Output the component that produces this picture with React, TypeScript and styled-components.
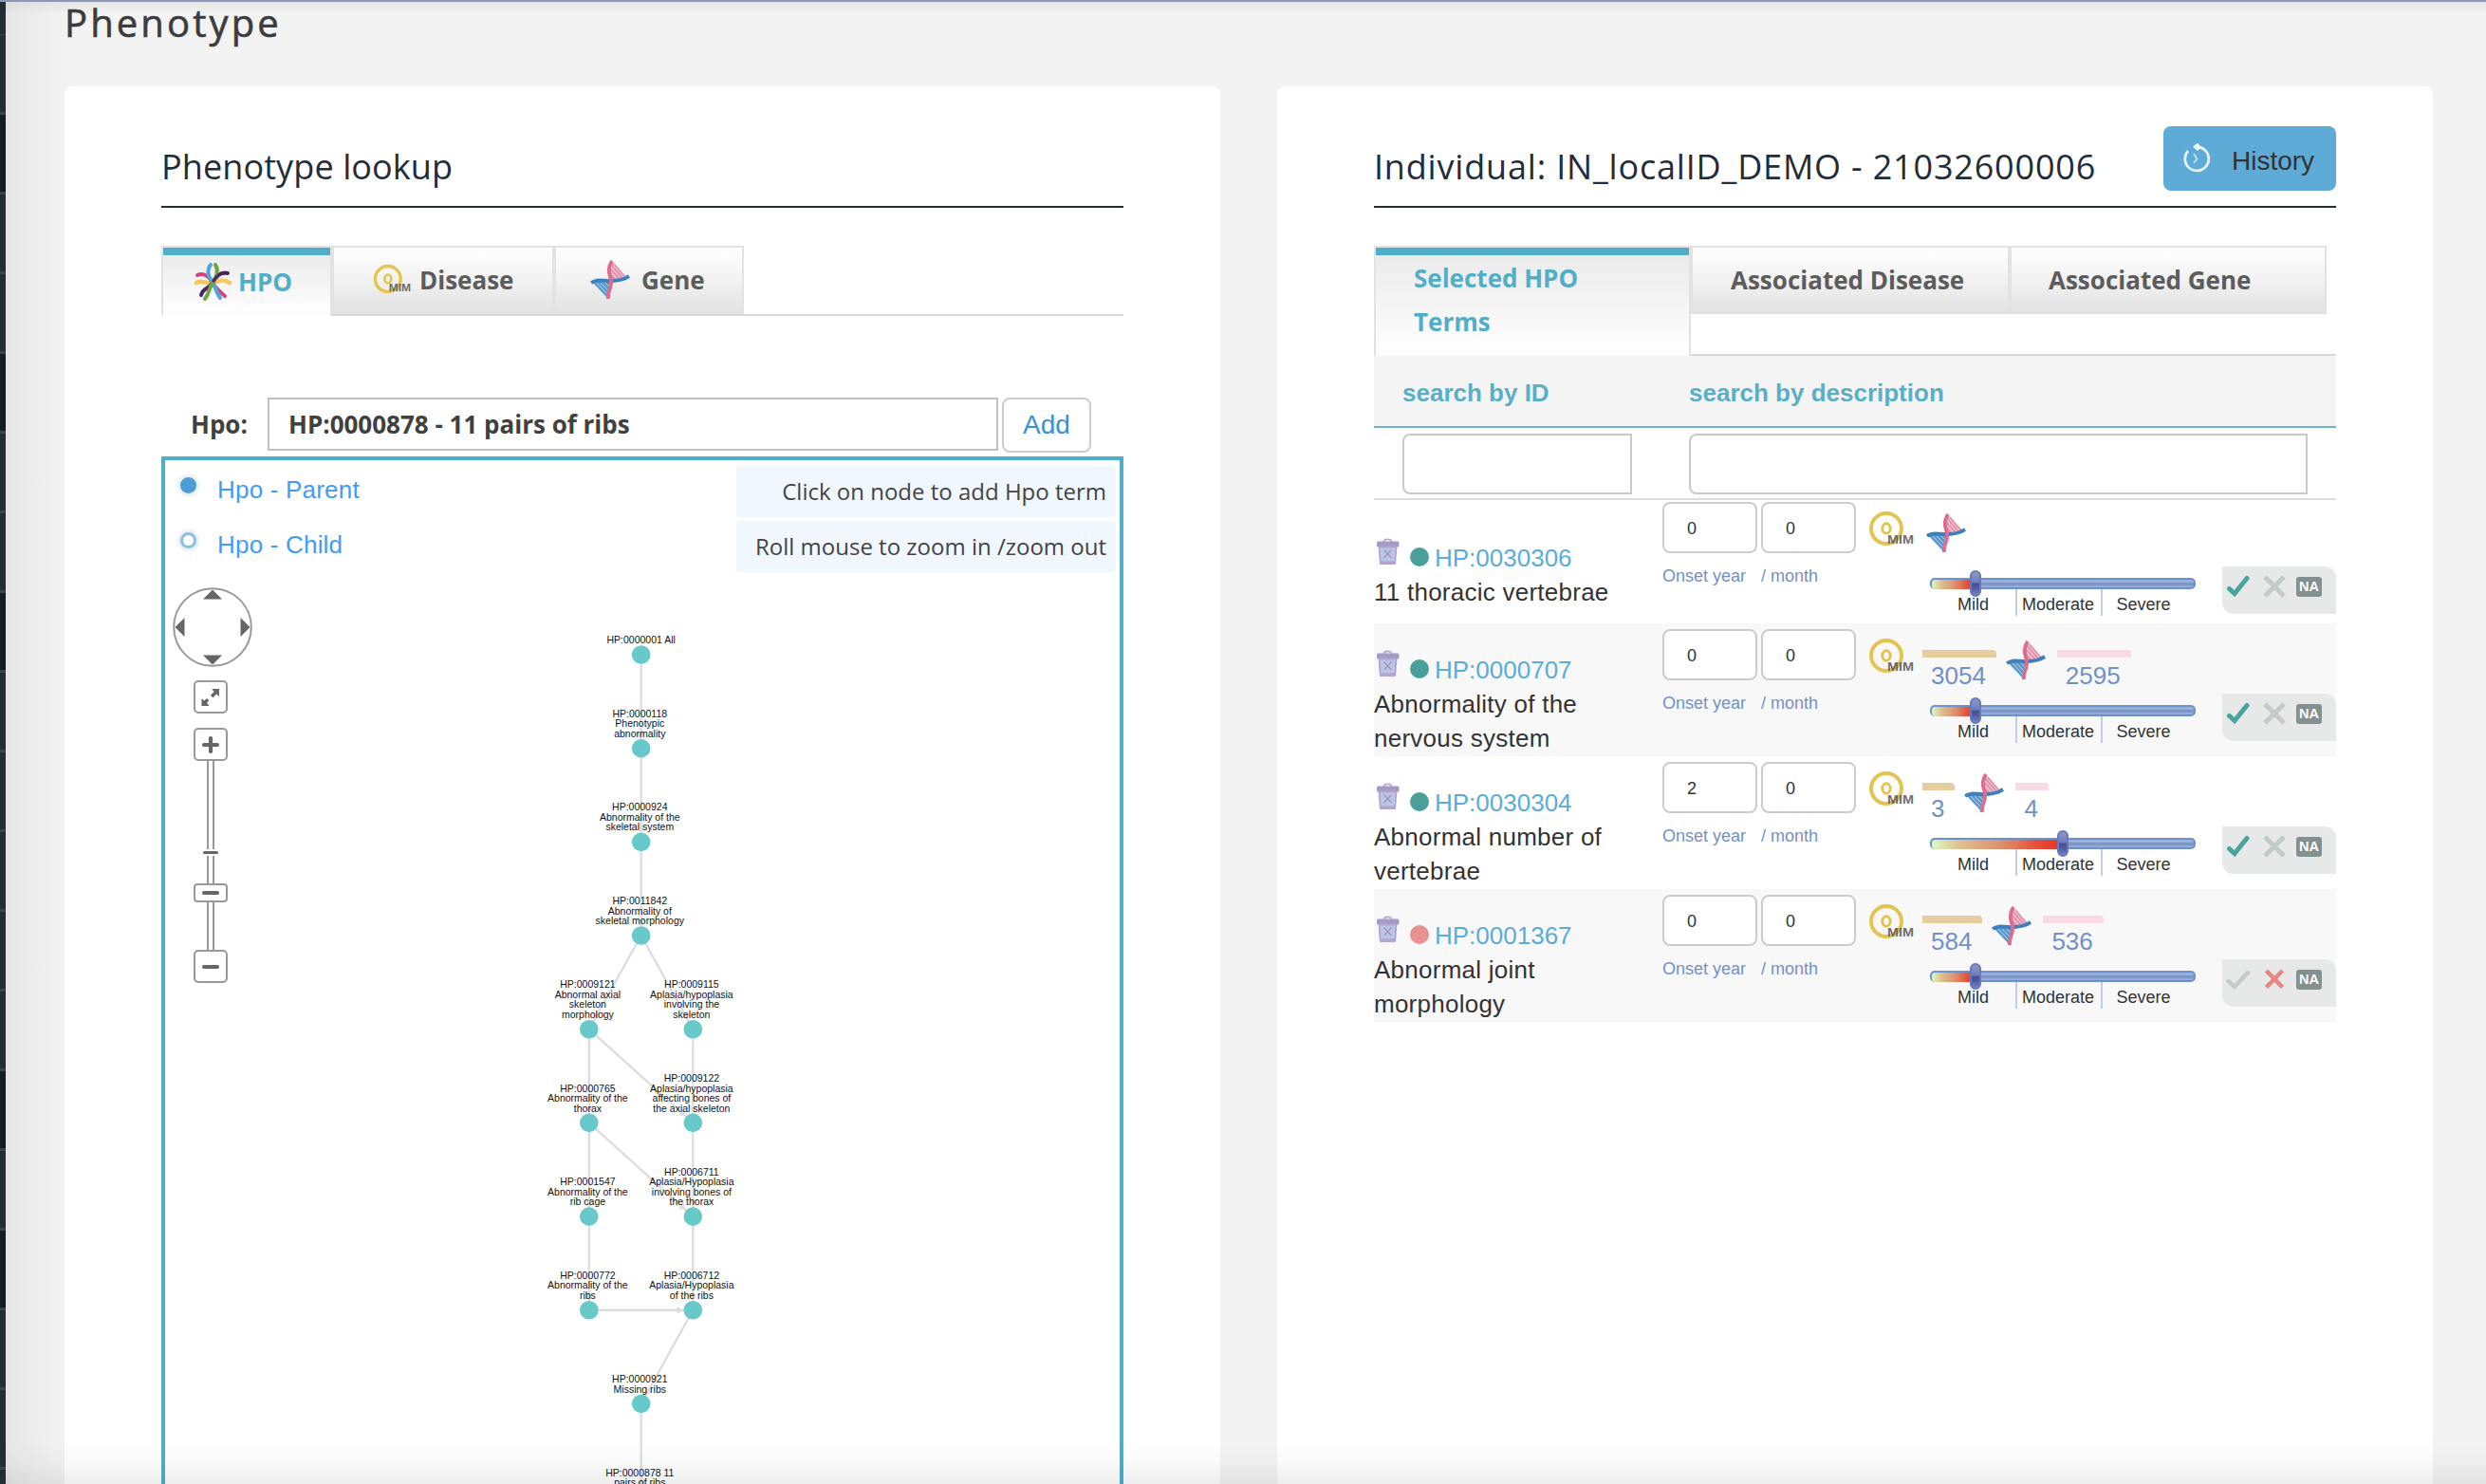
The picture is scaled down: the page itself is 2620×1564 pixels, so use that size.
import React from "react";
import styled, { createGlobalStyle } from "styled-components";

const teal = "#50aec8";
const sans = '"Liberation Sans", Arial, Helvetica, sans-serif';
const open = '"Open Sans", "Noto Sans", sans-serif';

const GlobalStyle = createGlobalStyle`
  * { box-sizing: border-box; }
  body { margin: 0; background: #f3f3f3; font-family: ${sans}; color: #333; }
  h1, h2, p { margin: 0; font-weight: 400; }
  input, button { font: inherit; outline: none; }
`;

/* ---------- shell ---------- */

const Shell = styled.div`
  position: relative;
  display: flex;
  width: 2620px;
  height: 1564px;
  overflow: hidden;
  border-top: 2px solid #8a97b8;
  background: #f3f3f3;
`;

const Sidebar = styled.nav`
  flex: 0 0 6px;
  padding-top: 34px;
  background: #222d38;
`;

const SideItem = styled.div<{ $dark?: boolean }>`
  height: 84px;
  border-top: 1px solid #3a454e;
  border-bottom: 2px solid #3a454e;
  background: ${(p) => (p.$dark ? "#161d22" : "#222d38")};
`;

const Main = styled.main`
  flex: 1;
  min-width: 0;
  padding: 0 56px 0 62px;
  background: linear-gradient(to right, #e6e6e6 0, #ebebeb 20px, #f0f0f0 48px, #f3f3f3 76px);
`;

const PageTitle = styled.h1`
  height: 89px;
  font: 400 40px/43px ${open};
  letter-spacing: 3.1px;
  color: #3c3c3c;
  -webkit-text-stroke: 0.6px #3c3c3c;
`;

const Columns = styled.div`
  display: flex;
  justify-content: space-between;
`;

const Panel = styled.section`
  width: 1218px;
  height: 1600px;
  padding: 0 102px;
  border-radius: 8px;
  background: #fff;
`;

const BottomShade = styled.div`
  position: absolute;
  left: 6px;
  right: 0;
  bottom: 0;
  height: 48px;
  background: linear-gradient(to bottom, rgba(0, 0, 0, 0), rgba(0, 0, 0, 0.018) 50%, rgba(0, 0, 0, 0.07));
  pointer-events: none;
`;

const TopShade = styled.div`
  position: absolute;
  left: 6px;
  right: 0;
  top: 0;
  height: 14px;
  background: linear-gradient(to bottom, rgba(0, 0, 0, 0.05), rgba(0, 0, 0, 0));
  pointer-events: none;
`;

const PanelHead = styled.header`
  display: flex;
  justify-content: space-between;
  height: 128px;
  margin-bottom: 40px;
  padding-top: 42px;
  border-bottom: 2px solid #222d3a;
`;

const Heading = styled.h2<{ $track: number }>`
  padding-top: 17px;
  font: 400 36px/52px ${open};
  letter-spacing: ${(p) => p.$track}px;
  color: #222d3a;
  white-space: nowrap;
`;

const HistoryButton = styled.button`
  display: flex;
  width: 182px;
  height: 68px;
  padding: 0 0 0 20px;
  border: 0;
  border-radius: 8px;
  background: #5dabd6;
  color: #333;
  font: 28px/73px ${sans};
  text-align: left;
  svg { margin: 17px 22px 0 0; }
`;

/* ---------- tabs ---------- */

const Tabs = styled.div<{ $height: number }>`
  display: flex;
  align-items: flex-start;
  height: ${(p) => p.$height}px;
  border-bottom: 2px solid #d9d9d9;
`;

const Tab = styled.div<{ $width: number; $active?: boolean; $tall?: boolean }>`
  display: flex;
  align-items: center;
  width: ${(p) => p.$width}px;
  height: ${(p) => (p.$tall ? 116 : p.$active ? 74 : 72)}px;
  padding-bottom: ${(p) => (p.$tall ? 4 : 0)}px;
  border: 2px solid #e2e2e2;
  border-bottom-width: ${(p) => (p.$active ? 0 : 2)}px;
  ${(p) => (p.$active ? `box-shadow: inset 0 8px ${teal};` : "")}
  background: ${(p) =>
    p.$active ? "linear-gradient(#e9e9e9, #fff)" : "linear-gradient(#fff, #f2f2f2 50%, #e2e2e2)"};
  color: ${(p) => (p.$active ? teal : "#5c5c5c")};
  font: 700 26px/46px ${open};
`;

const TabIcon = styled.span<{ $left: number; $gap: number }>`
  display: flex;
  margin: 0 ${(p) => p.$gap}px 0 ${(p) => p.$left}px;
`;

const TabText = styled.span<{ $pad?: number }>`
  padding-left: ${(p) => p.$pad || 0}px;
  white-space: pre-line;
`;

/* ---------- lookup ---------- */

const SearchRow = styled.div`
  display: flex;
  align-items: flex-start;
  height: 62px;
  margin-top: 86px;
  padding-left: 31px;
`;

const SearchLabel = styled.label`
  width: 81px;
  font: 700 26px/56px ${open};
  color: #404040;
`;

const SearchInput = styled.input`
  width: 770px;
  height: 56px;
  padding: 0 20px;
  border: 2px solid #c0c0c0;
  background: #fff;
  font: 700 26px/52px ${open};
  color: #404040;
`;

const AddButton = styled.button`
  width: 94px;
  height: 58px;
  margin-left: 4px;
  padding: 0;
  border: 2px solid #ccc;
  border-radius: 8px;
  background: #fff;
  color: #3b8fd4;
  font: 28px/54px ${sans};
`;

const GraphBox = styled.div`
  position: relative;
  height: 1200px;
  padding: 6px 4px 0 16px;
  border: 4px solid ${teal};
`;

const GraphTop = styled.div`
  display: flex;
  justify-content: space-between;
`;

const Legend = styled.div`
  display: flex;
  flex-direction: column;
`;

const LegendItem = styled.div`
  display: flex;
  height: 58px;
  color: #3f9bfb;
  font: 26px/51px ${sans};
  letter-spacing: 0.2px;
`;

const Radio = styled.span<{ $on?: boolean }>`
  width: 17px;
  height: 17px;
  margin: 12px 22px 0 0;
  border: ${(p) => (p.$on ? "0" : "3px solid #84c1e4")};
  border-radius: 50%;
  background: ${(p) => (p.$on ? "#4a9ed8" : "#fff")};
  box-shadow: 0 0 3px 3px #ededed;
`;

const Hints = styled.div`
  display: flex;
  flex-direction: column;
  gap: 4px;
`;

const Hint = styled.p`
  width: 400px;
  height: 54px;
  padding-right: 10px;
  border-radius: 4px;
  background: #f0f7fe;
  color: #444;
  font: 24px/54px ${open};
  text-align: right;
  white-space: nowrap;
`;

const ZoomControl = styled.div`
  position: absolute;
  left: 8px;
  top: 134px;
  width: 84px;
`;

const ZoomButton = styled.div<{ $gap?: number }>`
  display: flex;
  align-items: center;
  justify-content: center;
  width: 36px;
  height: 35px;
  margin: ${(p) => p.$gap || 0}px 0 0 22px;
  border: 2px solid #999;
  border-radius: 5px;
  background: #fff;
`;

const Rail = styled.div<{ $height: number }>`
  width: 8px;
  height: ${(p) => p.$height}px;
  margin-left: 36px;
  border: solid #999;
  border-width: 0 2px;
`;

const RailTick = styled.div`
  width: 16px;
  height: 3px;
  margin: 2px 0 2px 32px;
  border-radius: 2px;
  background: #666;
`;

const RailHandle = styled(ZoomButton)`
  height: 20px;
  border-radius: 4px;
`;

const GraphSvg = styled.svg`
  position: absolute;
  left: 0;
  top: 0;
  pointer-events: none;
  text { font-family: ${sans}; font-size: 10.5px; text-anchor: middle; fill: #111; }
`;

/* ---------- individual ---------- */

const TableHead = styled.div`
  display: grid;
  grid-template-columns: 302px 1fr;
  height: 76px;
  padding-left: 30px;
  border-bottom: 2px solid #6cb6cb;
  background: #f4f4f4;
  color: #5aafc6;
  font: 700 26px/78px ${sans};
`;

const FilterRow = styled.div`
  display: grid;
  grid-template-columns: 242px 652px;
  column-gap: 60px;
  height: 76px;
  padding: 6px 0 0 30px;
  border-bottom: 2px solid #ddd;
`;

const FilterInput = styled.input`
  width: 100%;
  height: 64px;
  padding: 0 16px;
  border: 2px solid #c9c9c9;
  border-radius: 8px 0 0 8px;
  background: #fff;
`;

const Row = styled.div<{ $alt: boolean; $first: boolean }>`
  display: grid;
  grid-template-columns: 304px 216px 374px 120px;
  height: ${(p) => (p.$first ? 130 : 140)}px;
  padding-top: ${(p) => (p.$first ? 2 : 6)}px;
  background: ${(p) => (p.$alt ? "#f8f8f8" : "#fff")};
`;

const TermCell = styled.div<{ $first: boolean }>`
  padding: ${(p) => (p.$first ? 41 : 25)}px 40px 0 0;
  font: 26px/36px ${sans};
  letter-spacing: 0.25px;
  color: #333;
`;

const TermHead = styled.div`
  display: flex;
  height: 36px;
  letter-spacing: 0;
  color: #5bacd8;
`;

const TrashWrap = styled.span`
  display: flex;
  width: 38px;
  margin: -3px 0 0 2px;
`;

const Dot = styled.span<{ $color: string }>`
  width: 20px;
  height: 20px;
  margin: 7px 6px 0 -2px;
  border-radius: 50%;
  background: ${(p) => p.$color};
`;

const OnsetPair = styled.div`
  display: grid;
  grid-template-columns: 100px 100px;
  gap: 4px;
`;

const OnsetInput = styled.input`
  width: 100px;
  height: 54px;
  padding: 2px 24px 0;
  border: 2px solid #ccc;
  border-radius: 8px;
  background: #fff;
  color: #333;
  font: 18px/48px ${sans};
`;

const OnsetLabel = styled.span`
  color: #7290c8;
  font: 18px/40px ${sans};
`;

const Evidence = styled.div`
  display: flex;
  align-items: flex-start;
  height: 80px;
`;

const IconSlot = styled.span<{ $left: number; $top: number; $width: number }>`
  display: flex;
  width: ${(p) => p.$width}px;
  padding-top: ${(p) => p.$top}px;
  margin-left: ${(p) => p.$left}px;
`;

const Count = styled.div<{ $left: number }>`
  margin: 22px 0 0 ${(p) => p.$left}px;
  color: #7290c8;
  font: 26px/38px ${sans};
`;

const CountBar = styled.div<{ $color: string }>`
  height: 8px;
  border-radius: 0 4px 0 0;
  background: ${(p) => p.$color};
`;

const CountText = styled.div`
  padding: 0 11px 0 9px;
`;

const Track = styled.div`
  position: relative;
  width: 280px;
  height: 12px;
  margin-left: 66px;
  border: 2px solid #6a92cf;
  border-radius: 5px;
  background: linear-gradient(#8fa8d6, #a3b6dc 20%, #728dc8 55%, #8aa3d3 75%, #9cb1da);
`;

const TrackFill = styled.div`
  height: 10px;
  border-radius: 4px 0 0 4px;
  background: linear-gradient(to right, #dcfac2, #dcc394 20%, #dc8d6c 55%, #e4503a 80%, #ea3222);
`;

const Thumb = styled.div`
  position: absolute;
  top: -10px;
  width: 12px;
  height: 28px;
  border: 2px solid #6a78b8;
  border-radius: 6px;
  background: linear-gradient(#8c98cb, #6f7dbb 45%, #454f96 52%, #4f5aa2 70%, #7384c6);
`;

const Scale = styled.div`
  display: grid;
  grid-template-columns: 92px 90px 86px;
  height: 28px;
  margin-left: 66px;
  color: #333;
  font: 18px/32px ${sans};
  text-align: center;
`;

const ScaleMark = styled.span`
  height: 28px;
  border-right: 2px solid #bcd0ee;
  &:first-child { padding-left: 1px; }
  &:nth-child(2) { padding-right: 2px; }
  &:last-child { border-right: 0; }
`;

const StatusBox = styled.div`
  display: flex;
  height: 50px;
  margin-top: 68px;
  padding: 8px 0 0 4px;
  border-radius: 0 12px 0 12px;
  background: #e6e9e8;
`;

const StatusIcon = styled.span<{ $width: number }>`
  width: ${(p) => p.$width}px;
  height: 28px;
`;

const NaBadge = styled.span`
  width: 27px;
  height: 21px;
  margin-top: 3px;
  border-radius: 3px;
  background: #82908f;
  color: #fff;
  font: 700 14.5px/21px ${sans};
  text-align: center;
`;

/* ---------- icons ---------- */

const HpoIcon = () => (
  <svg width="42" height="42" viewBox="0 0 42 42" fill="none" strokeWidth="4" strokeLinecap="round">
    <path d="M3 22C8 18 14 24 20 22S32 18 38 22" stroke="#f6c95a" strokeWidth="4.600" />
    <path d="M4 14C11 11 17 16 20 22S28 32 33 36" stroke="#d9417f" />
    <path d="M36 12C29 10 24 15 20 22S10 27 8 35" stroke="#4a2560" />
    <path d="M18 3C13 10 16 16 20 22S24 33 28 38" stroke="#4fa6da" />
    <path d="M23 3C27 10 24 16 20 22S17 33 12 39" stroke="#6fa544" />
    <path d="M34 12C28 11 24 15 21 20" stroke="#4a2560" strokeWidth="3" />
  </svg>
);

const OmimIcon = ({ width }: { width: number }) => (
  <svg width={width} height={width * 0.8} viewBox="0 0 50 40">
    <circle cx="20" cy="19" r="16" fill="none" stroke="#e3c450" strokeWidth="4" />
    <ellipse cx="20" cy="19" rx="4.200" ry="5.200" fill="none" stroke="#e3c450" strokeWidth="3" />
    <text
      x="21"
      y="34.500"
      fontFamily="Liberation Sans"
      fontWeight="700"
      fontSize="13.500"
      textLength="28"
      lengthAdjust="spacingAndGlyphs"
      fill="#505050"
      opacity=".82"
    >
      MIM
    </text>
  </svg>
);

const GeneIcon = () => (
  <svg width="42" height="42" viewBox="0 0 42 42" fill="none">
    <path d="M23 2C29 6 32 14 39 18L21 22Z" fill="#eebccb" />
    <path d="M2 23L18 40L21 21Z" fill="#5b9ace" />
    <g stroke="#df86a3" strokeWidth="1.200">
      <path d="M22 5L34 19M21 9L31 20M20 14L27 21M25 4L37 18" />
    </g>
    <g stroke="#b9d5eb" strokeWidth="1">
      <path d="M7 24L18 36M11 24L19 32M15 23L20 28" />
    </g>
    <path d="M1 24C8 19 14 23 24 22S36 20 41 17" stroke="#3d80bd" strokeWidth="3.800" />
    <path d="M23 1C16 12 23 17 22 25S18 34 19 41" stroke="#db6d8f" strokeWidth="4" />
  </svg>
);

const TrashIcon = () => (
  <svg width="26" height="29" viewBox="0 0 26 29" fill="none">
    <path d="M8.500 4C8.500 0.500 16.500 0.500 16.500 4" stroke="#bba7cd" strokeWidth="1.600" />
    <rect x="1" y="3.500" width="23.500" height="6" rx="1.500" fill="#a39ac7" />
    <path d="M3.500 9.500H21.500L20.200 27H4.800Z" fill="#b9c7e4" stroke="#b3a3cf" strokeWidth="1.800" strokeLinejoin="round" />
    <path d="M8.500 12.500L16.500 21M16.500 12.500L8.500 21" stroke="#a590c4" strokeWidth="1.300" />
    <path d="M5 25.200H20" stroke="#b3a3cf" strokeWidth="1.600" />
  </svg>
);

const HistoryIcon = () => (
  <svg width="30" height="34" viewBox="0 0 30 34" fill="none" stroke="#e4f1f9" strokeWidth="2.800">
    <path d="M6 9A12.500 12.500 0 1 0 17 5" />
    <path d="M11 4.500L16 0.800L20 5L16 9Z" fill="#f1f8fc" stroke="none" />
    <path d="M12 12L15.500 17.500L12 22" stroke="#b9daee" strokeWidth="2" />
  </svg>
);

const CheckIcon = ({ on }: { on: boolean }) => (
  <svg width="28" height="28" viewBox="0 0 28 28" fill="none">
    <path
      d={on ? "M3.500 15.500L9 20.500L22 4.500" : "M2.500 15L9 21L23 6"}
      stroke={on ? "#4aa39d" : "#c3caca"}
      strokeWidth={on ? 5 : 4.4}
      strokeLinecap="round"
    />
  </svg>
);

const CrossIcon = ({ on }: { on: boolean }) => (
  <svg width="28" height="28" viewBox="0 0 28 28" fill="none">
    <path
      d={on ? "M4.500 4L21.500 21.500M21.500 4L4.500 21.500" : "M3 3L23 23M23 3L3 23"}
      stroke={on ? "#e58883" : "#c3caca"}
      strokeWidth={on ? 4.6 : 5}
    />
  </svg>
);

const DialSvg = styled.svg`
  display: block;
`;

const PanDial = () => (
  <DialSvg width="84" height="84" viewBox="0 0 84 84">
    <circle cx="42" cy="42" r="40.800" fill="#fff" stroke="#999" strokeWidth="2" />
    <path d="M42 2.500L52 12.500H32ZM42 81.500L52 71.500H32ZM2.500 42L12.500 32V52ZM81.500 42L71.500 32V52Z" fill="#666" />
  </DialSvg>
);

const FitIcon = () => (
  <svg width="20" height="20" viewBox="0 0 20 20" fill="#666">
    <path d="M11 1H19V9L16.300 6.500L12.300 10.300L9.800 7.800L13.700 4Z" />
    <path d="M8.500 19H0.500V11L3.200 13.500L6 11L8.200 13.200L6 15.800Z" />
  </svg>
);

const PlusMinus = ({ plus }: { plus?: boolean }) => (
  <svg width="20" height="20" viewBox="0 0 20 20" fill="none" stroke="#666" strokeWidth="4.200" strokeLinecap="round">
    <path d={plus ? "M3 10H17M10 3V17" : "M3 10H17"} />
  </svg>
);

/* ---------- ontology graph ---------- */

const step = 98.68;
const rowY = (i: number) => 205 + i * step;
const MID = 501.7;
const LEFT = 446.8;
const RIGHT = 556.3;

type GraphNode = { id: string; x: number; row: number; lines: string[] };

const nodes: GraphNode[] = [
  { id: "all", x: MID, row: 0, lines: ["HP:0000001 All"] },
  { id: "118", x: MID, row: 1, lines: ["HP:0000118", "Phenotypic", "abnormality"] },
  { id: "924", x: MID, row: 2, lines: ["HP:0000924", "Abnormality of the", "skeletal system"] },
  { id: "11842", x: MID, row: 3, lines: ["HP:0011842", "Abnormality of", "skeletal morphology"] },
  { id: "9121", x: LEFT, row: 4, lines: ["HP:0009121", "Abnormal axial", "skeleton", "morphology"] },
  { id: "9115", x: RIGHT, row: 4, lines: ["HP:0009115", "Aplasia/hypoplasia", "involving the", "skeleton"] },
  { id: "765", x: LEFT, row: 5, lines: ["HP:0000765", "Abnormality of the", "thorax"] },
  { id: "9122", x: RIGHT, row: 5, lines: ["HP:0009122", "Aplasia/hypoplasia", "affecting bones of", "the axial skeleton"] },
  { id: "1547", x: LEFT, row: 6, lines: ["HP:0001547", "Abnormality of the", "rib cage"] },
  { id: "6711", x: RIGHT, row: 6, lines: ["HP:0006711", "Aplasia/Hypoplasia", "involving bones of", "the thorax"] },
  { id: "772", x: LEFT, row: 7, lines: ["HP:0000772", "Abnormality of the", "ribs"] },
  { id: "6712", x: RIGHT, row: 7, lines: ["HP:0006712", "Aplasia/Hypoplasia", "of the ribs"] },
  { id: "921", x: MID, row: 8, lines: ["HP:0000921", "Missing ribs"] },
  { id: "878", x: MID, row: 9, lines: ["HP:0000878 11", "pairs of ribs"] },
];

const edges = [
  ["all", "118"], ["118", "924"], ["924", "11842"], ["11842", "9121"], ["11842", "9115"],
  ["9121", "765"], ["9121", "9122"], ["9115", "9122"], ["765", "1547"], ["765", "6711"],
  ["9122", "6711"], ["1547", "772"], ["6711", "6712"], ["772", "6712"], ["6712", "921"], ["921", "878"],
];

const Graph = () => {
  const find = (id: string) => nodes.find((n) => n.id === id)!;
  return (
    <GraphSvg width="1006" height="1190" viewBox="0 0 1006 1190">
      <defs>
        <marker id="arrow" markerUnits="userSpaceOnUse" markerWidth="8" markerHeight="8" refX="17" refY="4" orient="auto" overflow="visible">
          <path d="M0 0L7 4L0 8Z" fill="#ddd" />
        </marker>
      </defs>
      {edges.map(([a, b]) => {
        const p = find(a);
        const q = find(b);
        return (
          <line key={a + b} x1={p.x} y1={rowY(p.row)} x2={q.x} y2={rowY(q.row)} stroke="#ddd" strokeWidth="2.300" markerEnd="url(#arrow)" />
        );
      })}
      {nodes.map((n) => (
        <g key={n.id}>
          <circle cx={n.x} cy={rowY(n.row)} r="9.800" fill="#67c9c9" />
          {n.lines.map((line, i) => (
            <text key={line} x={n.x - (n.row ? 1.4 : 0)} y={rowY(n.row) - 11.9 - (n.lines.length - 1 - i) * 10.5}>
              {line}
            </text>
          ))}
        </g>
      ))}
    </GraphSvg>
  );
};

/* ---------- data ---------- */

type Term = {
  id: string;
  name: string;
  year: string;
  month: string;
  disease?: string;
  gene?: string;
  severity: number;
  present: boolean;
};

const terms: Term[] = [
  { id: "HP:0030306", name: "11 thoracic vertebrae", year: "0", month: "0", severity: 46, present: true },
  { id: "HP:0000707", name: "Abnormality of the nervous system", year: "0", month: "0", disease: "3054", gene: "2595", severity: 46, present: true },
  { id: "HP:0030304", name: "Abnormal number of vertebrae", year: "2", month: "0", disease: "3", gene: "4", severity: 138, present: true },
  { id: "HP:0001367", name: "Abnormal joint morphology", year: "0", month: "0", disease: "584", gene: "536", severity: 46, present: false },
];

const darkItems = [0, 3, 6, 12, 14];

const TermRow = ({ term, index }: { term: Term; index: number }) => {
  const first = index === 0;
  return (
    <Row $alt={index % 2 === 1} $first={first}>
      <TermCell $first={first}>
        <TermHead>
          <TrashWrap><TrashIcon /></TrashWrap>
          <Dot $color={term.present ? "#4a9f9b" : "#e9918f"} />
          {term.id}
        </TermHead>
        <p>{term.name}</p>
      </TermCell>
      <div>
        <OnsetPair>
          <OnsetInput defaultValue={term.year} />
          <OnsetInput defaultValue={term.month} />
          <OnsetLabel>Onset year</OnsetLabel>
          <OnsetLabel>/ month</OnsetLabel>
        </OnsetPair>
      </div>
      <div>
        <Evidence>
          <IconSlot $left={0} $top={9} $width={52}><OmimIcon width={50} /></IconSlot>
          {term.disease && (
            <Count $left={6}>
              <CountBar $color="#e4cd9f" />
              <CountText>{term.disease}</CountText>
            </Count>
          )}
          <IconSlot $left={10} $top={12} $width={42}><GeneIcon /></IconSlot>
          {term.gene && (
            <Count $left={12}>
              <CountBar $color="#f8dae4" />
              <CountText>{term.gene}</CountText>
            </Count>
          )}
        </Evidence>
        <Track>
          <TrackFill style={{ width: term.severity }} />
          <Thumb style={{ left: term.severity - 6 }} />
        </Track>
        <Scale>
          <ScaleMark>Mild</ScaleMark>
          <ScaleMark>Moderate</ScaleMark>
          <ScaleMark>Severe</ScaleMark>
        </Scale>
      </div>
      <StatusBox>
        <StatusIcon $width={38}><CheckIcon on={term.present} /></StatusIcon>
        <StatusIcon $width={36}><CrossIcon on={!term.present} /></StatusIcon>
        <NaBadge>NA</NaBadge>
      </StatusBox>
    </Row>
  );
};

export default function App() {
  return (
    <Shell>
      <GlobalStyle />
      <Sidebar>
        <SideItem />
        {Array.from({ length: 18 }, (_, i) => (
          <SideItem key={i} $dark={darkItems.includes(i)} />
        ))}
      </Sidebar>
      <Main>
        <PageTitle>Phenotype</PageTitle>
        <Columns>
          <Panel>
            <PanelHead>
              <Heading $track={0.1}>Phenotype lookup</Heading>
            </PanelHead>
            <Tabs $height={74}>
              <Tab $width={180} $active>
                <TabIcon $left={32} $gap={5}><HpoIcon /></TabIcon>
                <TabText>HPO</TabText>
              </Tab>
              <Tab $width={234}>
                <TabIcon $left={40} $gap={8}><OmimIcon width={42} /></TabIcon>
                <TabText>Disease</TabText>
              </Tab>
              <Tab $width={200}>
                <TabIcon $left={36} $gap={12}><GeneIcon /></TabIcon>
                <TabText>Gene</TabText>
              </Tab>
            </Tabs>
            <SearchRow>
              <SearchLabel>Hpo:</SearchLabel>
              <SearchInput defaultValue="HP:0000878 - 11 pairs of ribs" />
              <AddButton>Add</AddButton>
            </SearchRow>
            <GraphBox>
              <Graph />
              <GraphTop>
                <Legend>
                  <LegendItem><Radio $on />Hpo - Parent</LegendItem>
                  <LegendItem><Radio />Hpo - Child</LegendItem>
                </Legend>
                <Hints>
                  <Hint>Click on node to add Hpo term</Hint>
                  <Hint>Roll mouse to zoom in /zoom out</Hint>
                </Hints>
              </GraphTop>
              <ZoomControl>
                <PanDial />
                <ZoomButton $gap={14}><FitIcon /></ZoomButton>
                <ZoomButton $gap={15}><PlusMinus plus /></ZoomButton>
                <Rail $height={93} />
                <RailTick />
                <Rail $height={29} />
                <RailHandle><PlusMinus /></RailHandle>
                <Rail $height={50} />
                <ZoomButton><PlusMinus /></ZoomButton>
              </ZoomControl>
            </GraphBox>
          </Panel>
          <Panel>
            <PanelHead>
              <Heading $track={0.82}>Individual: IN_localID_DEMO - 21032600006</Heading>
              <HistoryButton><HistoryIcon />History</HistoryButton>
            </PanelHead>
            <Tabs $height={116}>
              <Tab $width={334} $active $tall>
                <TabText $pad={40}>{"Selected HPO\nTerms"}</TabText>
              </Tab>
              <Tab $width={336}><TabText $pad={40}>Associated Disease</TabText></Tab>
              <Tab $width={334}><TabText $pad={39}>Associated Gene</TabText></Tab>
            </Tabs>
            <TableHead>
              <span>search by ID</span>
              <span>search by description</span>
            </TableHead>
            <FilterRow>
              <FilterInput />
              <FilterInput />
            </FilterRow>
            {terms.map((t, i) => (
              <TermRow key={t.id} term={t} index={i} />
            ))}
          </Panel>
        </Columns>
      </Main>
      <TopShade />
      <BottomShade />
    </Shell>
  );
}
